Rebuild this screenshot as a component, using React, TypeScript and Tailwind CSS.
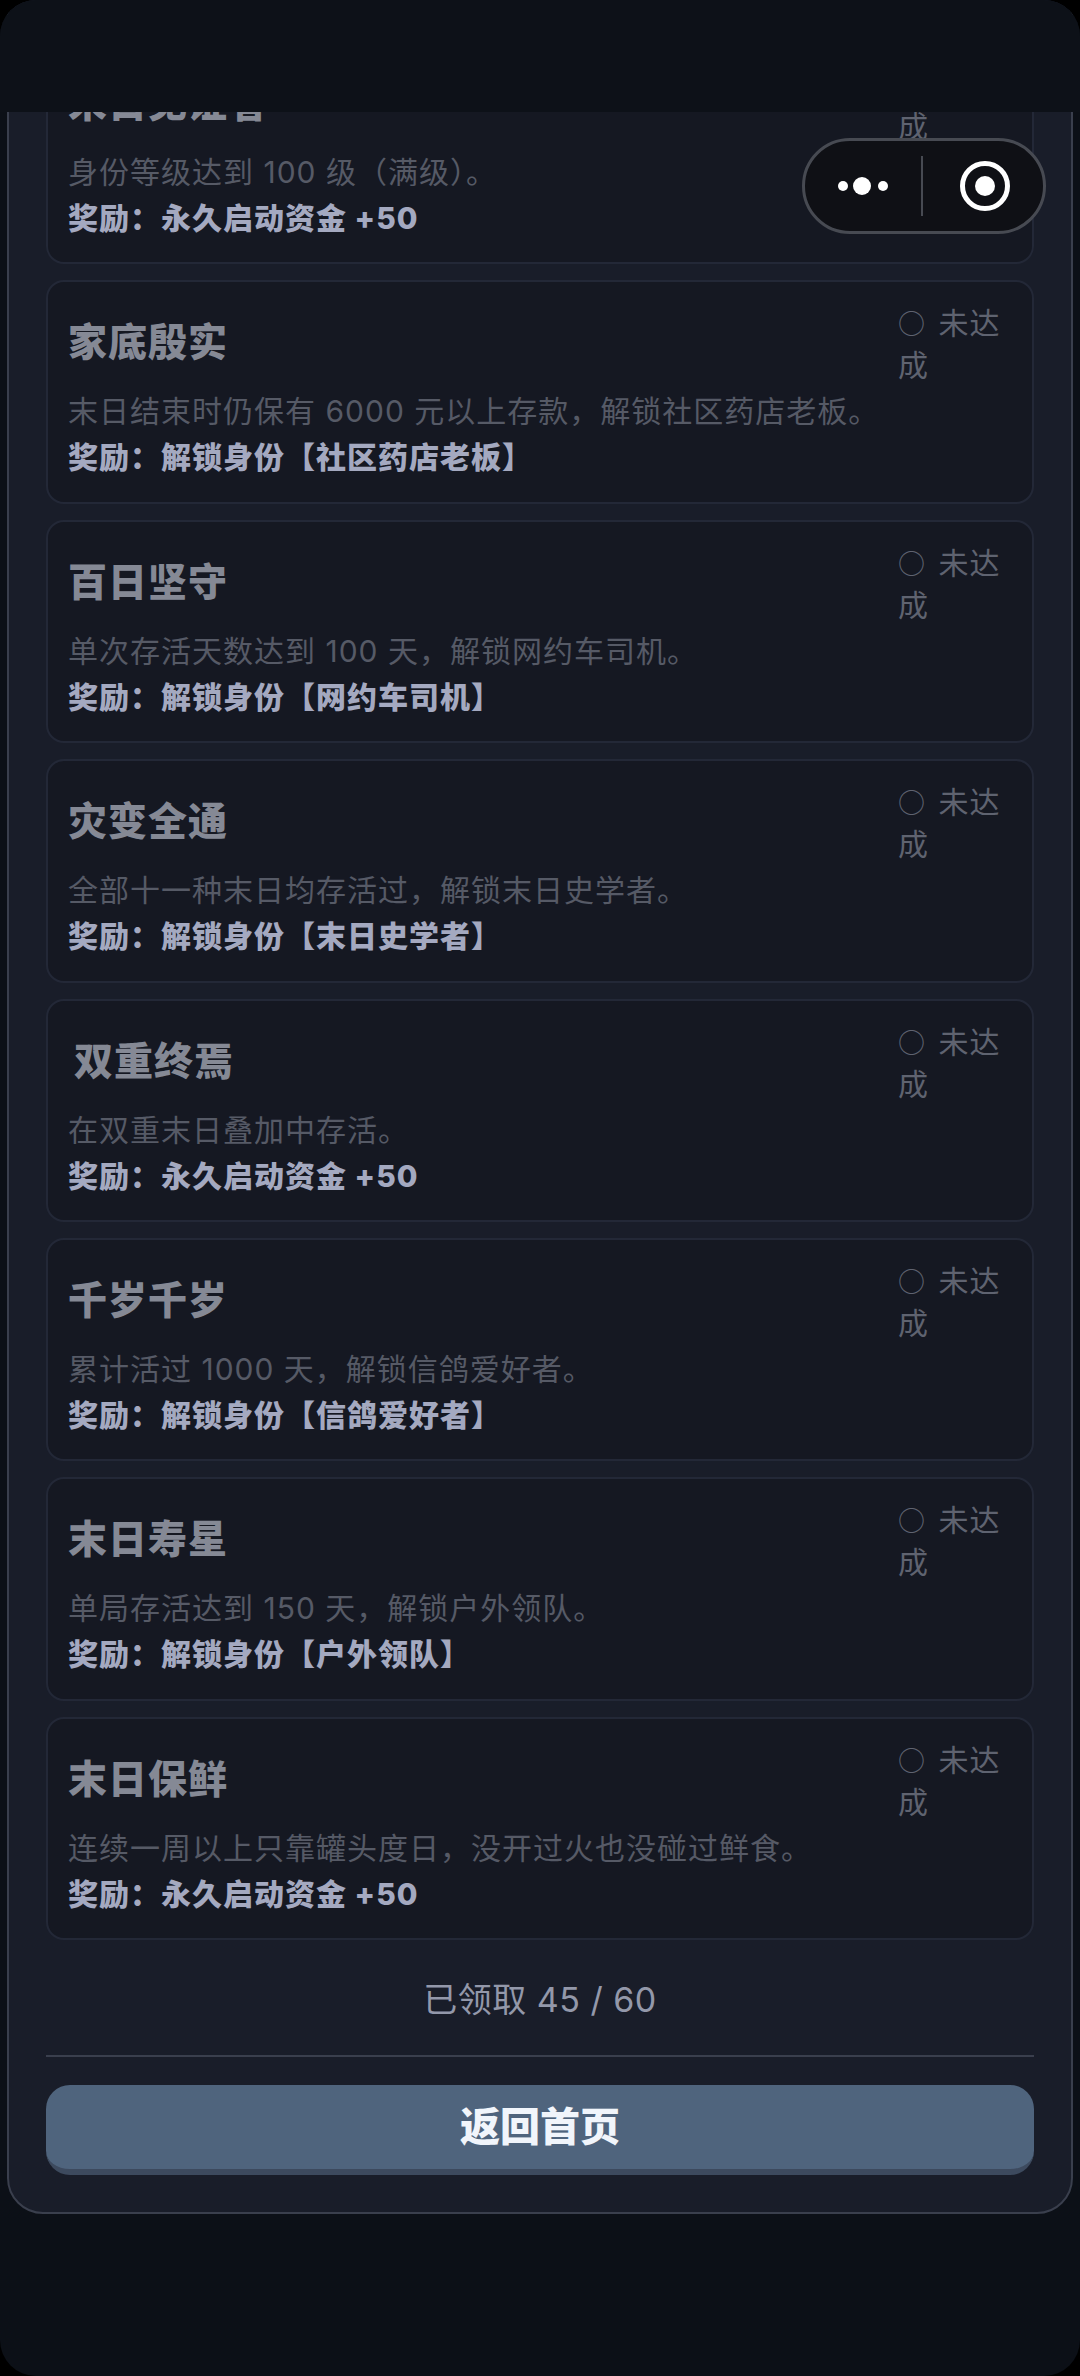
const cards = [
  { title: '末日见证者', desc: '身份等级达到 100 级（满级）。', reward: '永久启动资金 +50' },
  { title: '家底殷实', desc: '末日结束时仍保有 6000 元以上存款，解锁社区药店老板。', reward: '解锁身份【社区药店老板】' },
  { title: '百日坚守', desc: '单次存活天数达到 100 天，解锁网约车司机。', reward: '解锁身份【网约车司机】' },
  { title: '灾变全通', desc: '全部十一种末日均存活过，解锁末日史学者。', reward: '解锁身份【末日史学者】' },
  { title: '双重终焉', desc: '在双重末日叠加中存活。', reward: '永久启动资金 +50', indent: true },
  { title: '千岁千岁', desc: '累计活过 1000 天，解锁信鸽爱好者。', reward: '解锁身份【信鸽爱好者】' },
  { title: '末日寿星', desc: '单局存活达到 150 天，解锁户外领队。', reward: '解锁身份【户外领队】' },
  { title: '末日保鲜', desc: '连续一周以上只靠罐头度日，没开过火也没碰过鲜食。', reward: '永久启动资金 +50' },
]

function Card({ title, desc, reward, indent }: { title: string; desc: string; reward: string; indent?: boolean }) {
  return (
    <div className="h-[223.4px] rounded-[18px] border-2 border-[#232837] bg-[#151822] pl-[20px] pr-[22px] pt-[20px] tracking-[1px]">
      <div className="flex items-start justify-between">
        <div className={`mt-[15px] text-[39px] leading-[50px] font-black text-[#858995] ${indent ? 'pl-[6px]' : ''}`}>{title}</div>
        <div className="w-[112px] shrink-0 text-[30px] leading-[42px] text-[#5f6370]">
          <span className="mr-[4px] font-['Noto_Sans_CJK_SC'] text-[27px] leading-[42px] tracking-normal">○</span> 未达成
        </div>
      </div>
      <div className="mt-[2px] text-[30px] leading-[46px] text-[#565a66]">{desc}</div>
      <div className="text-[30px] leading-[46px] font-extrabold text-[#a4a9c0]">奖励：{reward}</div>
    </div>
  )
}

export default function App() {
  return (
    <div className="bg-black">
      <div
        className="relative h-[2376px] w-[1080px] overflow-hidden rounded-[36px] bg-[#0c1017]"
        style={{ fontFamily: 'Inter, "Noto Sans CJK SC", sans-serif' }}
      >
        {/* panel runs off the top of the screen, the list is scrolled */}
        <div className="mx-[7px] mt-[-60px] h-[2274px] rounded-[36px] border-2 border-[#3a3f4d] bg-[#191d29] px-[37px] pt-[99px]">
          <div className="flex flex-col gap-[16px]">
            {cards.map((c) => (
              <Card key={c.title} {...c} />
            ))}
          </div>
          <div className="mt-[35px] text-center text-[34px] leading-[50px] tracking-[0.5px] text-[#9398aa]">已领取 45 / 60</div>
          <div className="mt-[30px] h-[2px] bg-[#3a3f4d]" />
          <button className="mt-[28px] h-[90px] w-full rounded-[24px] border-b-[6px] border-[#3d4a5e] bg-[#4f647d] text-[40px] font-black text-[#f1f5fb]">
            返回首页
          </button>
        </div>

        {/* top bar */}
        <div className="absolute inset-x-0 top-0 h-[112px] bg-[#0d1118]" />

        {/* mini program capsule */}
        <div className="absolute left-[802px] top-[138px] flex h-[96px] w-[244px] items-center rounded-full border-[3px] border-[#474a52] bg-[#0f1015]">
          <div className="flex flex-1 items-center justify-center">
            <svg width="52" height="20" viewBox="0 0 52 20" fill="#fff">
              <circle cx="6" cy="10" r="5" />
              <circle cx="25" cy="10" r="9" />
              <circle cx="46" cy="10" r="5" />
            </svg>
          </div>
          <div className="h-[60px] w-[2px] bg-[#474a52]" />
          <div className="flex w-[120px] items-center justify-center pl-[4px]">
            <svg width="50" height="50" viewBox="0 0 50 50" fill="none">
              <circle cx="25" cy="25" r="22.5" stroke="#fff" strokeWidth="5" />
              <circle cx="25" cy="25" r="10" fill="#fff" />
            </svg>
          </div>
        </div>
      </div>
    </div>
  )
}
